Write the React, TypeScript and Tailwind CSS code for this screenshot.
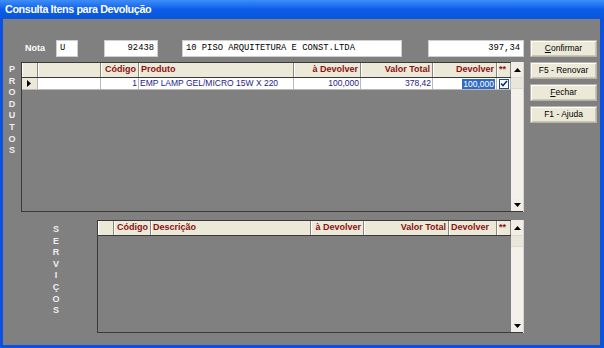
import React from "react";

interface Col {
  w: number;
  label: string;
  align?: "left" | "right";
}

interface Cell {
  text?: string;
  highlight?: boolean;
  check?: boolean;
  pointer?: boolean;
}

const prodCols: Col[] = [
  { w: 16, label: "" },
  { w: 63, label: "" },
  { w: 38, label: "Código", align: "right" },
  { w: 155, label: "Produto" },
  { w: 67, label: "à Devolver", align: "right" },
  { w: 72, label: "Valor Total", align: "right" },
  { w: 64, label: "Devolver", align: "right" },
  { w: 14, label: "**" },
];

const prodRows: Cell[][] = [
  [
    { pointer: true },
    {},
    { text: "1" },
    { text: "EMP LAMP GEL/MICRO 15W X 220" },
    { text: "100,000" },
    { text: "378,42" },
    { text: "100,000", highlight: true },
    { check: true },
  ],
];

const servCols: Col[] = [
  { w: 16, label: "" },
  { w: 37, label: "Código", align: "right" },
  { w: 160, label: "Descrição" },
  { w: 53, label: "à Devolver", align: "right" },
  { w: 85, label: "Valor Total", align: "right" },
  { w: 48, label: "Devolver" },
  { w: 14, label: "**" },
];

const Arrow = ({ up }: { up?: boolean }) => (
  <svg width="7" height="4" viewBox="0 0 7 4">
    <path d={up ? "M0 4 L3.5 0 L7 4 Z" : "M0 0 L3.5 4 L7 0 Z"} fill="#000" />
  </svg>
);

// Vertical stacked caption (PRODUTOS / SERVIÇOS)
const VLabel = ({ text }: { text: string }) => (
  <div className="flex flex-col items-center font-bold text-[9px] leading-[11.6px] text-[#eeeeee]">
    {text.split("").map((c, i) => (
      <span key={i}>{c}</span>
    ))}
  </div>
);

const Grid = ({ cols, rows, height }: { cols: Col[]; rows: Cell[][]; height: number }) => {
  const alignOf = (c: Col) => (c.align === "right" ? "justify-end" : "justify-start");
  return (
    <div className="flex" style={{ height }}>
      <div className="flex flex-col border-l border-t border-b border-[#3a3a3a]">
        {/* header */}
        <div className="flex h-[15px] border-b border-[#3a3a3a] bg-[#ece9d8]">
          {cols.map((c, i) => (
            <div
              key={i}
              style={{ width: c.w }}
              className={`flex items-center ${alignOf(c)} px-[2px] border-r border-[#8a887c] shadow-[inset_1px_0_0_#ffffff] text-[9px] font-bold text-[#8b1111] whitespace-nowrap overflow-hidden`}
            >
              {c.label}
            </div>
          ))}
        </div>
        {/* rows */}
        {rows.map((r, ri) => (
          <div key={ri} className="flex h-[12px] border-b border-[#b8b8b8]">
            {cols.map((c, i) => {
              const cell = r[i] || {};
              return (
                <div
                  key={i}
                  style={{ width: c.w }}
                  className={`flex items-center ${cell.check ? "justify-center" : alignOf(c)} ${
                    cell.pointer ? "bg-[#ece9d8] justify-start pl-[5px]" : "bg-white"
                  } px-[1px] border-r border-[#b8b8b8] text-[8.5px] text-[#1c1c8a] whitespace-nowrap overflow-hidden`}
                >
                  {cell.pointer && (
                    <svg width="4" height="7" viewBox="0 0 4 7">
                      <path d="M0 0 L4 3.5 L0 7 Z" fill="#000" />
                    </svg>
                  )}
                  {cell.highlight ? (
                    <span className="bg-[#316ac5] text-white px-[1px] leading-[10px]">{cell.text}</span>
                  ) : (
                    cell.text
                  )}
                  {cell.check && (
                    <div className="w-[10px] h-[10px] border border-[#1c5180] bg-white flex items-center justify-center">
                      <svg width="8" height="7" viewBox="0 0 8 7">
                        <path d="M1 3.5 L3 5.5 L7 1" stroke="#0f2a8c" strokeWidth="1.6" fill="none" />
                      </svg>
                    </div>
                  )}
                </div>
              );
            })}
          </div>
        ))}
        <div className="flex-1" />
      </div>
      {/* scrollbar */}
      <div className="w-[13px] flex flex-col bg-[#f3f1ea] border-r border-[#d8d6cc]">
        <div className="h-[15px] flex items-center justify-center bg-[#f0eee6]">
          <Arrow up />
        </div>
        <div className="h-[12px] bg-[#e9e7dc] border-y border-[#dcdacf]" />
        <div className="flex-1" />
        <div className="h-[13px] flex items-center justify-center bg-[#f0eee6] border-b border-[#3a3a3a]">
          <Arrow />
        </div>
      </div>
    </div>
  );
};

const Btn = ({ children }: { children: React.ReactNode }) => (
  <button className="h-[17px] w-[67px] bg-[#ece9d8] border border-[#b7b4a6] shadow-[inset_1px_1px_0_#ffffff,inset_-1px_-1px_0_#cbc7b8] text-[8.5px] text-black flex items-center justify-center">
    {children}
  </button>
);

const Input = ({ w, ml, text, right }: { w: number; ml: number; text: string; right?: boolean }) => (
  <div
    style={{ width: w, marginLeft: ml }}
    className={`h-[17px] bg-white border border-[#cfcfcf] flex items-center px-[3px] ${
      right ? "justify-end" : "justify-start"
    } font-['Liberation_Mono',monospace] text-[8.8px] text-black whitespace-nowrap`}
  >
    {text}
  </div>
);

export default function App() {
  return (
    <div className="w-[604px] h-[348px] flex flex-col bg-[#0b52e0] font-['Liberation_Sans',Arial,sans-serif] overflow-hidden">
      {/* title bar */}
      <div className="h-[19px] flex items-center pl-[5px] bg-linear-to-b from-[#3d8ef8] via-[#0c5ce8] to-[#0a56dc] text-white font-bold text-[10.8px] tracking-[-0.4px]">
        Consulta Itens para Devolução
      </div>

      {/* body */}
      <div className="flex-1 ml-[3px] mr-[4px] mb-[3px] bg-[#808080] flex">
        <div className="flex flex-col w-[521px]">
          {/* Nota row */}
          <div className="flex items-center mt-[21px] h-[17px]">
            <span className="ml-[22px] text-[9px] font-bold text-white">Nota</span>
            <Input w={22} ml={11} text="U" />
            <Input w={54} ml={26} text="92438" right />
            <Input w={220} ml={24} text="10 PISO ARQUITETURA E CONST.LTDA" />
            <Input w={96} ml={26} text="397,34" right />
          </div>

          {/* produtos */}
          <div className="flex mt-[5px]">
            <div className="w-[19px] flex justify-center pt-[2px]">
              <VLabel text="PRODUTOS" />
            </div>
            <Grid cols={prodCols} rows={prodRows} height={150} />
          </div>

          {/* servicos */}
          <div className="flex mt-[8px]">
            <div className="w-[95px] flex justify-center pt-[4px] pl-[12px]">
              <VLabel text="SERVIÇOS" />
            </div>
            <Grid cols={servCols} rows={[]} height={113} />
          </div>
        </div>

        {/* buttons */}
        <div className="flex flex-col gap-[5px] ml-[6px] mt-[21px]">
          <Btn>
            <span className="underline">C</span>onfirmar
          </Btn>
          <Btn>F5 - Renovar</Btn>
          <Btn>
            <span className="underline">F</span>echar
          </Btn>
          <Btn>F1 - Ajuda</Btn>
        </div>
      </div>
    </div>
  );
}
